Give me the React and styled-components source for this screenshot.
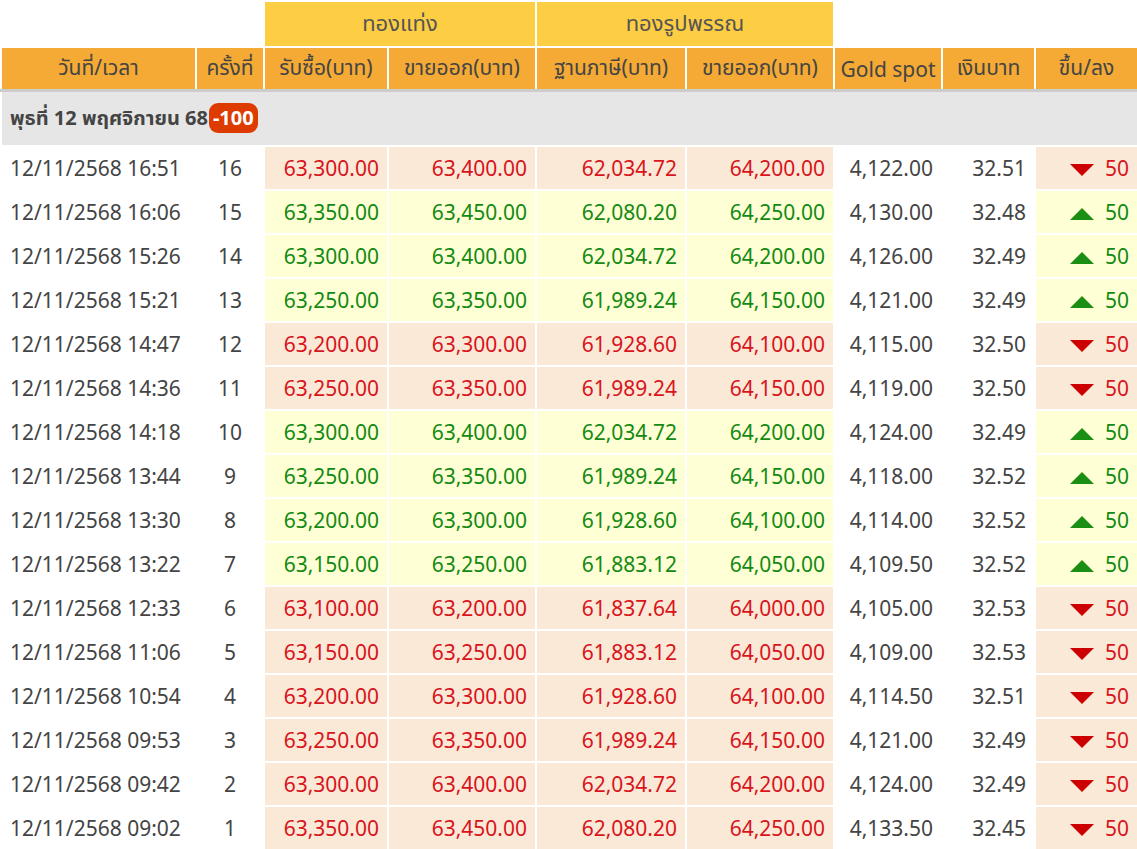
import React from 'react'
import styled, { createGlobalStyle } from 'styled-components'

const Global = createGlobalStyle`
  body { margin: 0; background: #fff; font-family: "Noto Sans", "Noto Sans Thai", "DejaVu Sans", sans-serif; }
`

const Table = styled.table`
  width: 1137px;
  border-collapse: collapse;
  table-layout: fixed;
  font-size: 20px;
  color: #444;
  td, th { border: 2px solid #fff; padding: 0; }
`

const GroupHead = styled.th`
  background: ${p => (p.$empty ? '#fff' : '#fdcd44')};
  height: 44px;
  font-weight: 400;
  font-size: 22px;
  color: #555;
`

const ColHead = styled.th`
  background: #f4aa35;
  height: 41px;
  font-weight: 400;
  font-size: 21px;
  color: #444;
  white-space: nowrap;
  border-bottom: 3px solid #ccc !important;
`

const DayCell = styled.td`
  background: #e6e6e6;
  height: 53px;
  padding-left: 8px !important;
  font-weight: 700;
  font-size: 20px;
  color: #444;
  white-space: nowrap;
`

const Badge = styled.span`
  display: inline-block;
  background: #dd3b00;
  color: #fff;
  border-radius: 9px;
  padding: 3px 4px;
  margin-left: 1px;
  line-height: 1.2;
`

const Cell = styled.td`
  height: 42px;
  font-size: 21px;
  text-align: ${p => p.$align || 'right'};
  padding: 0 8px !important;
  background: ${p => (p.$tone === 'down' ? '#fbe9d8' : p.$tone === 'up' ? '#ffffd5' : '#fff')};
  color: ${p => (p.$color === 'down' ? '#d8141c' : p.$color === 'up' ? '#138a13' : '#444')};
  white-space: nowrap;
`

const Arrow = ({ up }) => (
  <svg width="26" height="14" viewBox="0 0 26 14" style={{ marginRight: 10, verticalAlign: 'middle' }}>
    <polygon points={up ? '13,1 25,13 1,13' : '1,1 25,1 13,13'} fill={up ? '#1a8f14' : '#cc0000'} />
  </svg>
)

const rows = [
  ['16:51', 16, '63,300.00', '63,400.00', '62,034.72', '64,200.00', '4,122.00', '32.51', 'down'],
  ['16:06', 15, '63,350.00', '63,450.00', '62,080.20', '64,250.00', '4,130.00', '32.48', 'up'],
  ['15:26', 14, '63,300.00', '63,400.00', '62,034.72', '64,200.00', '4,126.00', '32.49', 'up'],
  ['15:21', 13, '63,250.00', '63,350.00', '61,989.24', '64,150.00', '4,121.00', '32.49', 'up'],
  ['14:47', 12, '63,200.00', '63,300.00', '61,928.60', '64,100.00', '4,115.00', '32.50', 'down'],
  ['14:36', 11, '63,250.00', '63,350.00', '61,989.24', '64,150.00', '4,119.00', '32.50', 'down'],
  ['14:18', 10, '63,300.00', '63,400.00', '62,034.72', '64,200.00', '4,124.00', '32.49', 'up'],
  ['13:44', 9, '63,250.00', '63,350.00', '61,989.24', '64,150.00', '4,118.00', '32.52', 'up'],
  ['13:30', 8, '63,200.00', '63,300.00', '61,928.60', '64,100.00', '4,114.00', '32.52', 'up'],
  ['13:22', 7, '63,150.00', '63,250.00', '61,883.12', '64,050.00', '4,109.50', '32.52', 'up'],
  ['12:33', 6, '63,100.00', '63,200.00', '61,837.64', '64,000.00', '4,105.00', '32.53', 'down'],
  ['11:06', 5, '63,150.00', '63,250.00', '61,883.12', '64,050.00', '4,109.00', '32.53', 'down'],
  ['10:54', 4, '63,200.00', '63,300.00', '61,928.60', '64,100.00', '4,114.50', '32.51', 'down'],
  ['09:53', 3, '63,250.00', '63,350.00', '61,989.24', '64,150.00', '4,121.00', '32.49', 'down'],
  ['09:42', 2, '63,300.00', '63,400.00', '62,034.72', '64,200.00', '4,124.00', '32.49', 'down'],
  ['09:02', 1, '63,350.00', '63,450.00', '62,080.20', '64,250.00', '4,133.50', '32.45', 'down'],
]

export default function App() {
  return (
    <>
      <Global />
      <Table>
        <colgroup>
          <col style={{ width: 195 }} />
          <col style={{ width: 68 }} />
          <col style={{ width: 124 }} />
          <col style={{ width: 148 }} />
          <col style={{ width: 150 }} />
          <col style={{ width: 148 }} />
          <col style={{ width: 108 }} />
          <col style={{ width: 93 }} />
          <col style={{ width: 103 }} />
        </colgroup>
        <thead>
          <tr>
            <GroupHead $empty colSpan={2} />
            <GroupHead colSpan={2}>ทองแท่ง</GroupHead>
            <GroupHead colSpan={2}>ทองรูปพรรณ</GroupHead>
            <GroupHead $empty colSpan={3} />
          </tr>
          <tr>
            <ColHead>วันที่/เวลา</ColHead>
            <ColHead>ครั้งที่</ColHead>
            <ColHead>รับซื้อ(บาท)</ColHead>
            <ColHead>ขายออก(บาท)</ColHead>
            <ColHead>ฐานภาษี(บาท)</ColHead>
            <ColHead>ขายออก(บาท)</ColHead>
            <ColHead>Gold spot</ColHead>
            <ColHead>เงินบาท</ColHead>
            <ColHead>ขึ้น/ลง</ColHead>
          </tr>
        </thead>
        <tbody>
          <tr>
            <DayCell colSpan={9}>
              พุธที่ 12 พฤศจิกายน 68<Badge>-100</Badge>
            </DayCell>
          </tr>
          {rows.map(r => {
            const t = r[8]
            return (
              <tr key={r[1]}>
                <Cell $align="left">12/11/2568 {r[0]}</Cell>
                <Cell $align="center">{r[1]}</Cell>
                <Cell $tone={t} $color={t}>{r[2]}</Cell>
                <Cell $tone={t} $color={t}>{r[3]}</Cell>
                <Cell $tone={t} $color={t}>{r[4]}</Cell>
                <Cell $tone={t} $color={t}>{r[5]}</Cell>
                <Cell>{r[6]}</Cell>
                <Cell>{r[7]}</Cell>
                <Cell $tone={t} $color={t}>
                  <Arrow up={t === 'up'} />50
                </Cell>
              </tr>
            )
          })}
        </tbody>
      </Table>
    </>
  )
}
